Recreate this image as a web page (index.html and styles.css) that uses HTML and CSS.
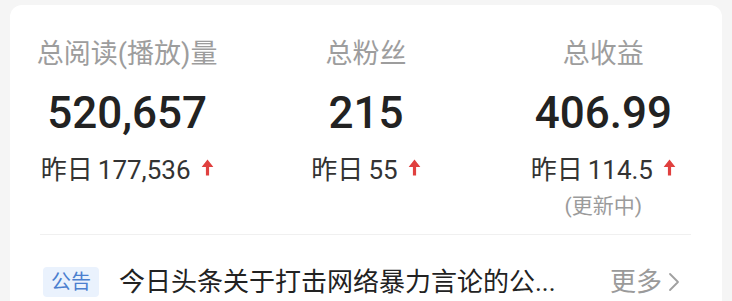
FILE: index.html
```html
<!DOCTYPE html>
<html lang="zh-CN">
<head>
<meta charset="utf-8">
<title>数据概览</title>
<link rel="stylesheet" href="styles.css">
</head>
<body>
<div class="card">
  <div class="stats">
    <div class="stat">
      <div class="stat-title">总阅读(播放)量</div>
      <div class="stat-value">520,657</div>
      <div class="stat-delta"><span class="delta-label">昨日</span> 177,536<svg class="up" viewBox="0 0 12 16" width="13" height="17"><path d="M6 0.5 L11.5 7.5 H7.5 V15.5 H4.5 V7.5 H0.5 Z" fill="#e0403f"/></svg></div>
    </div>
    <div class="stat">
      <div class="stat-title">总粉丝</div>
      <div class="stat-value">215</div>
      <div class="stat-delta"><span class="delta-label">昨日</span> 55<svg class="up" viewBox="0 0 12 16" width="13" height="17"><path d="M6 0.5 L11.5 7.5 H7.5 V15.5 H4.5 V7.5 H0.5 Z" fill="#e0403f"/></svg></div>
    </div>
    <div class="stat">
      <div class="stat-title">总收益</div>
      <div class="stat-value">406.99</div>
      <div class="stat-delta"><span class="delta-label">昨日</span> 114.5<svg class="up" viewBox="0 0 12 16" width="13" height="17"><path d="M6 0.5 L11.5 7.5 H7.5 V15.5 H4.5 V7.5 H0.5 Z" fill="#e0403f"/></svg></div>
      <div class="stat-note">(更新中)</div>
    </div>
  </div>
  <div class="divider"></div>
  <div class="notice">
    <span class="badge">公告</span>
    <span class="notice-text">今日头条关于打击网络暴力言论的公...</span>
    <span class="more">更多<svg class="chev" viewBox="0 0 12 20" width="12" height="20"><path d="M2 2 L10 10 L2 18" fill="none" stroke="#a0a0a0" stroke-width="1.8" stroke-linecap="round" stroke-linejoin="round"/></svg></span>
  </div>
</div>
</body>
</html>
```

FILE: styles.css
```css
* { box-sizing: border-box; }
html, body { margin: 0; padding: 0; }
body {
  background: #f5f5f5;
  font-family: Roboto, "Noto Sans CJK SC", "Noto Sans", sans-serif;
  color: #222;
  width: 732px;
  height: 301px;
  overflow: hidden;
}
.card {
  margin: 5px 10px 0 10px;
  background: #fff;
  border-radius: 12px 12px 0 0;
  height: 296px;
  overflow: hidden;
}
.stats {
  display: grid;
  grid-template-columns: 1fr 1fr 1fr;
  padding-top: 34px;
}
.stat {
  display: flex;
  flex-direction: column;
  align-items: center;
}
.stat:first-child { margin-left: -3px; }
.stat-title {
  font-size: 27px;
  line-height: 30px;
  color: #9d9d9d;
}
.stat-value {
  margin-top: 19px;
  font-size: 44px;
  line-height: 50px;
  font-weight: 500;
  color: #222;
}
.stat-delta {
  margin-top: 17px;
  font-size: 26px;
  line-height: 30px;
  color: #333;
  display: flex;
  align-items: center;
}
.delta-label { margin-right: 5px; }
.up {
  flex: none;
  margin-left: 10px;
  margin-top: -5px;
}
.stat-note {
  margin-top: 8px;
  font-size: 21px;
  line-height: 26px;
  color: #9b9b9b;
}
.divider {
  height: 1px;
  background: #f0f0f0;
  margin: 15px 31px 0 30px;
}
.notice {
  display: flex;
  align-items: center;
  margin-top: 29px;
  padding: 0 42px 0 33px;
  height: 36px;
}
.badge {
  flex: none;
  height: 30px;
  line-height: 30px;
  padding: 0 8px;
  font-size: 20px;
  color: #4b7fcf;
  background: #eaf2fd;
  border-radius: 4px;
}
.notice-text {
  flex: 1;
  margin-left: 20px;
  font-size: 26px;
  line-height: 36px;
  color: #222;
  white-space: nowrap;
  overflow: hidden;
}
.more {
  flex: none;
  display: flex;
  align-items: center;
  font-size: 26px;
  line-height: 36px;
  color: #9a9a9a;
}
.chev {
  flex: none;
  margin-left: 6px;
}
```
